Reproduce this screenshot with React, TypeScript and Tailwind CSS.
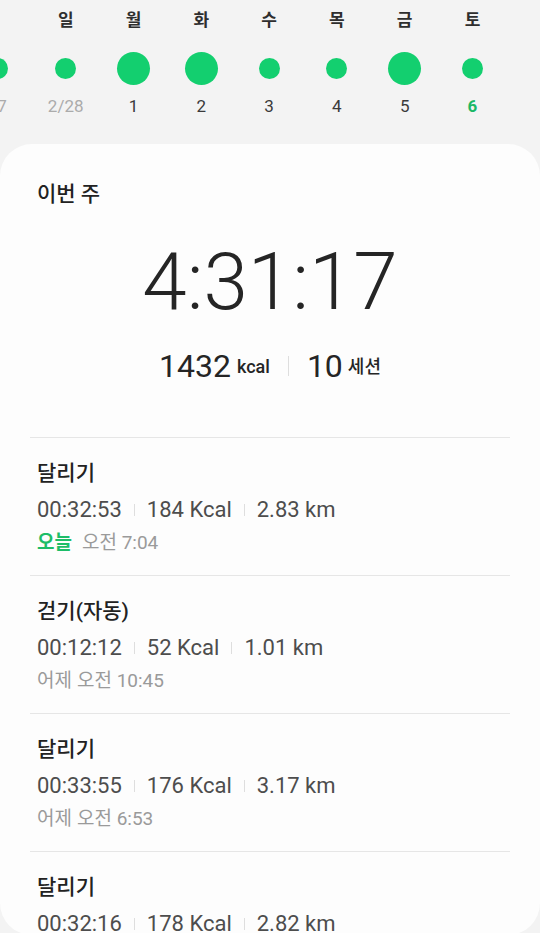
const days = [
  { label: "", date: "2/27", size: "sm", tone: "past" },
  { label: "일", date: "2/28", size: "sm", tone: "past" },
  { label: "월", date: "1", size: "lg", tone: "normal" },
  { label: "화", date: "2", size: "lg", tone: "normal" },
  { label: "수", date: "3", size: "sm", tone: "normal" },
  { label: "목", date: "4", size: "sm", tone: "normal" },
  { label: "금", date: "5", size: "lg", tone: "normal" },
  { label: "토", date: "6", size: "sm", tone: "today" },
];

const workouts = [
  { name: "달리기", time: "00:32:53", kcal: "184 Kcal", dist: "2.83 km", when: "오전 7:04", today: true, day: "" },
  { name: "걷기(자동)", time: "00:12:12", kcal: "52 Kcal", dist: "1.01 km", when: "오전 10:45", today: false, day: "어제" },
  { name: "달리기", time: "00:33:55", kcal: "176 Kcal", dist: "3.17 km", when: "오전 6:53", today: false, day: "어제" },
  { name: "달리기", time: "00:32:16", kcal: "178 Kcal", dist: "2.82 km", when: "오전 6:20", today: false, day: "어제" },
];

function DayColumn(props: { label: string; date: string; size: string; tone: string; first?: boolean }) {
  const dateColor =
    props.tone === "past" ? "text-[#ababab]" : props.tone === "today" ? "text-[#1bb866] font-bold" : "text-[#3a3a3a]";
  return (
    <div className="w-[67.8px] shrink-0 flex flex-col items-center">
      <div className="h-6 leading-6 text-[17px] font-semibold text-[#2e2e2e]">{props.label}</div>
      <div className="mt-[19px] h-[34px] flex items-center justify-center">
        <div className={props.size === "lg" ? "w-[33px] h-[33px] rounded-full bg-[#13cf6f]" : "w-[21px] h-[21px] rounded-full bg-[#13cf6f]"} />
      </div>
      <div className={`mt-[9px] h-6 leading-6 text-[17px] ${dateColor} ${props.first ? "mr-[18px]" : ""}`}>{props.date}</div>
    </div>
  );
}

function Sep(props: { h: string }) {
  return <span className={`inline-block w-px bg-[#dedede] ${props.h}`} />;
}

function WorkoutRow(props: (typeof workouts)[number]) {
  return (
    <div>
      <div className="h-px bg-[#e6e6e6]" />
      <div className="pt-[21px] pb-[19px] px-[7px]">
        <div className="h-7 leading-7 text-[21px] font-medium text-[#222]">{props.name}</div>
        <div className="mt-2 h-[30px] leading-[30px] text-[22px] text-[#4d4d4d] flex items-center">
          <span>{props.time}</span>
          <span className="mx-[12px] flex items-center"><Sep h="h-3" /></span>
          <span>{props.kcal}</span>
          <span className="mx-[12px] flex items-center"><Sep h="h-3" /></span>
          <span>{props.dist}</span>
        </div>
        <div className="mt-[5px] h-[26px] leading-[26px] text-[19px] text-[#9a9a9a] flex">
          {props.today ? (
            <span className="text-[#1dbd68] font-bold mr-[10px]">오늘</span>
          ) : (
            <span className="mr-[5px]">{props.day}</span>
          )}
          <span>{props.when}</span>
        </div>
      </div>
    </div>
  );
}

export default function App() {
  return (
    <div
      className="w-[540px] h-[933px] overflow-hidden bg-[#f3f3f3]"
      style={{ fontFamily: "Roboto, 'Noto Sans CJK KR', sans-serif" }}
    >
      <div className="pt-2 pb-[26px] flex ml-[-36px]">
        {days.map((d, i) => (
          <DayColumn key={i} {...d} first={i === 0} />
        ))}
      </div>

      <div className="h-[791px] rounded-[32px] bg-[#fdfdfd] pt-9 px-[30px]">
        <div className="px-[7px] h-7 leading-7 text-[21px] font-medium text-[#222]">이번 주</div>

        <div className="mt-[34px] h-20 leading-[80px] text-center text-[80px] font-light text-[#252525]">
          4:31:17
        </div>

        <div className="mt-6 h-10 flex items-center justify-center text-[#252525]">
          <span className="text-[32px] leading-10">1432</span>
          <span className="ml-[6px] text-[18px] font-medium leading-10 self-end -mb-[1px]">kcal</span>
          <span className="mx-[18px] flex items-center"><Sep h="h-5" /></span>
          <span className="text-[32px] leading-10">10</span>
          <span className="ml-[5px] text-[18px] font-medium leading-10 self-end -mb-[1px]">세션</span>
        </div>

        <div className="mt-[51px]">
          {workouts.map((w, i) => (
            <WorkoutRow key={i} {...w} />
          ))}
        </div>
      </div>
    </div>
  );
}
